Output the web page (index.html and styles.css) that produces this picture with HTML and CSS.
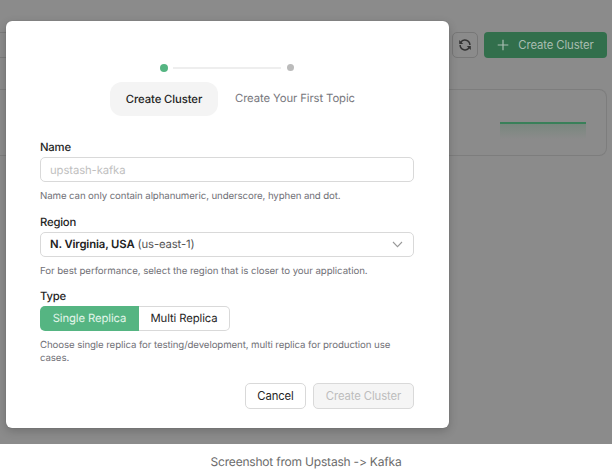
FILE: index.html
```html
<!DOCTYPE html>
<html lang="en">
<head>
<meta charset="utf-8">
<title>Upstash Kafka</title>
<link rel="stylesheet" href="styles.css">
</head>
<body>
<figure class="figure">
  <div class="screen">
    <div class="toolbar">
      <div class="search"></div>
      <button class="refresh" aria-label="Refresh">
        <svg width="14" height="14" viewBox="0 0 14 14" fill="none" stroke="#333" stroke-width="1.5">
          <path d="M2.6 4.6A5 5 0 0 1 11.9 7M11.4 9.4A5 5 0 0 1 2.1 7"/>
          <path d="M1.2 1.9v4h4zM12.8 12.1v-4h-4z" fill="#333" stroke="none"/>
        </svg>
      </button>
      <button class="new">
        <svg width="12" height="12" viewBox="0 0 12 12" stroke="#a9bdb1" stroke-width="1.2"><path d="M6 .7v10.6M.7 6h10.6"/></svg>
        <span>Create Cluster</span>
      </button>
    </div>
    <div class="card"><div class="spark"></div></div>
    <div class="modal">
      <div class="steps">
        <div class="track"><i class="dot active"></i><i class="line"></i><i class="dot"></i></div>
        <div class="titles"><span class="pill">Create Cluster</span><span class="next">Create Your First Topic</span></div>
      </div>
      <div class="field">
        <div class="label">Name</div>
        <div class="control placeholder">upstash-kafka</div>
        <div class="help tight">Name can only contain alphanumeric, underscore, hyphen and dot.</div>
      </div>
      <div class="field">
        <div class="label">Region</div>
        <div class="control select">
          <span><b>N. Virginia, USA</b> (us-east-1)</span>
          <svg width="11" height="7" viewBox="0 0 11 7" fill="none" stroke="#999" stroke-width="1.1"><path d="M1 1l4.5 4.6L10 1"/></svg>
        </div>
        <div class="help">For best performance, select the region that is closer to your application.</div>
      </div>
      <div class="field">
        <div class="label">Type</div>
        <div class="segment"><span class="on">Single Replica</span><span class="off">Multi Replica</span></div>
        <div class="help tight">Choose single replica for testing/development, multi replica for production use cases.</div>
      </div>
      <div class="actions"><button class="cancel">Cancel</button><button class="submit">Create Cluster</button></div>
    </div>
  </div>
  <figcaption>Screenshot from Upstash -&gt; Kafka</figcaption>
</figure>
</body>
</html>
```
FILE: styles.css
```css
* { box-sizing: border-box; }
body { margin: 0; background: #fff; font: 11.3px/14px Inter, sans-serif; letter-spacing: -.1px; color: #252525; overflow: hidden; text-rendering: geometricPrecision; font-feature-settings: "calt" 0; }
button { font: inherit; letter-spacing: inherit; padding: 0; margin: 0; display: flex; align-items: center; justify-content: center; }
.figure { margin: 0; width: 612px; height: 471px; }
.screen { position: relative; height: 443.5px; background: #8b8b8b; padding: 32px 5px 0 0; overflow: hidden; }
.toolbar { display: flex; height: 26px; }
.search { flex: 1; border: 1px solid #7b7b7b; border-left: 0; border-radius: 0 5px 5px 0; margin-right: 6px; }
.refresh { width: 26px; border: 1px solid #777; border-radius: 5px; background: none; margin-right: 6px; }
.new { width: 123px; border: 0; border-radius: 4px; background: #326f4c; color: #a9bdb1; gap: 9px; }
.card { height: 67px; margin-top: 31px; border: 1px solid #7d7d7d; border-left: 0; border-radius: 0 8px 8px 0; padding: 32px 20px 0 0; }
.spark { width: 86px; height: 17px; margin-left: auto; border-top: 2px solid #398059; background: linear-gradient(#79877e, #8b8b8b); }
.modal { position: absolute; left: 6px; top: 21px; width: 443px; height: 407px; padding: 42px 35px 0 34px; background: #fff; border-radius: 6px; box-shadow: 0 3px 10px rgba(0,0,0,.2), 0 0 1px rgba(0,0,0,.3); }
.track { display: flex; align-items: center; height: 9px; margin-left: 120px; }
.dot { width: 7px; height: 7px; border-radius: 50%; background: #bbb; }
.dot.active { width: 8px; height: 8px; background: #55b582; }
.line { width: 108px; height: 2px; margin: 0 6px 0 5px; background: #eee; }
.titles { display: flex; margin: 10px 0 0 70px; }
.pill { width: 108px; height: 34px; line-height: 34px; border-radius: 12px; background: #f4f4f4; text-align: center; font-weight: 500; }
.next { margin-left: 17px; line-height: 32px; color: #77777d; }
.steps { height: 77px; }
.field { height: 74.5px; }
.label { height: 17px; line-height: 14px; font-weight: 550; letter-spacing: -.2px; }
.control { display: flex; align-items: center; justify-content: space-between; height: 25px; padding: 0 10px 0 9px; border: 1px solid #d9d9d9; border-radius: 5px; }
.placeholder { color: #bfbfbf; }
.select { color: #555; letter-spacing: -.13px; }
.select b { font-weight: 600; color: #222; }
.help { margin-top: 9px; font-size: 9.7px; line-height: 12.5px; letter-spacing: -.07px; color: #717177; }
.help.tight { letter-spacing: -.11px; }
.segment { display: flex; height: 25px; line-height: 25px; text-align: center; }
.on { width: 99px; background: #55b582; color: #e4f5eb; border-radius: 5px 0 0 5px; }
.off { width: 91px; line-height: 23px; border: 1px solid #d9d9d9; border-left: 0; border-radius: 0 5px 5px 0; }
.actions { display: flex; justify-content: flex-end; gap: 7px; height: 26px; margin-top: 19px; }
.cancel { width: 61px; background: #fff; color: #252525; border: 1px solid #d9d9d9; border-radius: 5px; }
.submit { width: 101px; background: #f5f5f5; color: #bdbdbd; border: 1px solid #d9d9d9; border-radius: 5px; }
figcaption { text-align: center; font-size: 12px; line-height: 16px; letter-spacing: -.2px; padding-top: 10px; color: #6b6b6b; }
```
